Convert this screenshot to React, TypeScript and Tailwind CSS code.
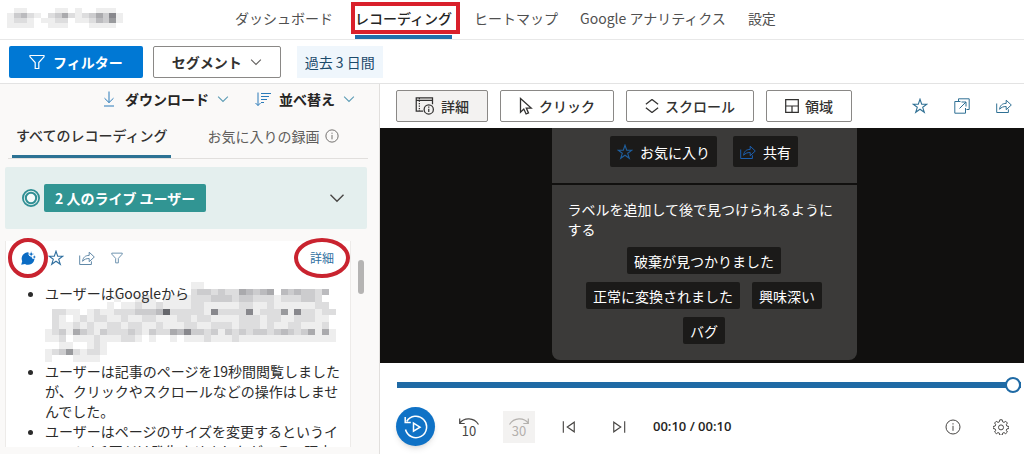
import React from 'react';

interface IconProps {
  className?: string;
  children: React.ReactNode;
}

const Icon: React.FC<IconProps> = ({ className = 'size-4', children }) => (
  <svg
    viewBox="0 0 16 16"
    fill="none"
    stroke="currentColor"
    strokeWidth="1"
    className={`shrink-0 ${className}`}
    aria-hidden="true"
  >
    {children}
  </svg>
);

const StarIcon = ({ className }: { className?: string }) => (
  <Icon className={className}>
    <path d="M8 1.200l1.700 5h5.200l-4.200 3.100 1.600 5L8 11.200l-4.300 3.100 1.600-5L1.100 6.200h5.200z" strokeWidth="1.100" />
  </Icon>
);

const ShareIcon = ({ className }: { className?: string }) => (
  <Icon className={className}>
    <path d="M.7 5.500v9h11.700v-3.200" />
    <path d="M3.600 11.300c.5-4 2.700-5.900 6.600-5.900V2.200l5.100 4.800-5.100 4.700V8.500c-3 0-5 .8-6.600 2.800z" />
  </Icon>
);

const FunnelIcon = ({ className }: { className?: string }) => (
  <Icon className={className}>
    <path d="M1 1.500h14v1.300L9.800 8.500v6H6.200v-6L1 2.800z" strokeWidth="1.200" />
  </Icon>
);

const ChevronIcon = ({ className }: { className?: string }) => (
  <Icon className={className}>
    <path d="M1.500 4.800L8 11.300l6.500-6.500" strokeWidth="1.400" />
  </Icon>
);

const InfoIcon = ({ className }: { className?: string }) => (
  <Icon className={className}>
    <circle cx="8" cy="8" r="7" />
    <path d="M8 6.800v5M8 4.200v1.300" />
  </Icon>
);

// Each digit is one cell, 0 is clear and 9 is the darkest
const siteNameCells = [
  '01100001101001110',
  '13421023521235371',
  '12210112201124361',
  '11110011100011110',
];

const summaryCells = [
  '000000000000000000000110000000000000000000',
  '000000000000000000000233232254345043433240',
  '000000000010012101111222333233222122233200',
  '000000000101121121111221111122112111111220',
  '022110121122233349222221722227122261722122',
  '021012122112112211122122111122212211222110',
  '021121211221221121112211222122212112211120',
  '123153213222321322547332313232332343235151',
  '112011121112210100101112111211111111111111',
  '001100121000000000000000000000000000000000',
  '123621221000000000000000000000000000000000',
  '100011110000000000000000000000000000000000',
];

const Mosaic: React.FC<{ cells: string[]; className: string }> = ({ cells, className }) => (
  <svg
    viewBox={`0 0 ${cells[0].length} ${cells.length}`}
    preserveAspectRatio="none"
    shapeRendering="crispEdges"
    className={className}
    aria-hidden="true"
  >
    {cells.map((row, y) =>
      row
        .split('')
        .map((level, x) => (
          <rect key={`${x}-${y}`} x={x} y={y} width="1" height="1" fill="#55565c" opacity={Number(level) / 10} />
        ))
    )}
  </svg>
);

const navItems = ['ダッシュボード', 'レコーディング', 'ヒートマップ', 'Google アナリティクス', '設定'];

const Header = () => (
  <header className="flex h-10 shrink-0 items-stretch border-b border-[#e8e8e8]">
    <div className="flex w-[235px] shrink-0 items-center pl-[7px] pb-1">
      <Mosaic cells={siteNameCells} className="h-5 w-[116px]" />
    </div>
    <nav className="flex gap-[22px] whitespace-nowrap text-[#505050]">
      {navItems.map((item) =>
        item === 'レコーディング' ? (
          <a key={item} href="#" className="relative border-b-4 border-[#1f6fab] pt-2 font-medium text-[#252525]">
            {item}
            <span className="absolute top-0.5 -right-2 -left-1 h-8 border-4 border-[#d9202b]" />
          </a>
        ) : (
          <a key={item} href="#" className="pt-2">
            {item}
          </a>
        )
      )}
    </nav>
  </header>
);

const FilterBar = () => (
  <div className="flex h-11 shrink-0 items-center border-b border-[#e3e3e3] px-[9px]">
    <button className="flex h-8 items-center gap-2 rounded-xs bg-[#0078d4] px-5 font-bold text-white">
      <FunnelIcon />
      フィルター
    </button>
    <button className="ml-2.5 flex h-8 items-center gap-2 rounded-xs border border-[#8a8886] px-[18px] font-bold text-[#323130]">
      セグメント
      <ChevronIcon className="size-3 text-[#605e5c]" />
    </button>
    <button className="ml-4 h-8 bg-[#eff6fc] px-2 text-[#1b4a6b]">過去 3 日間</button>
  </div>
);

const SessionCard = () => (
  <article className="relative min-w-0 flex-1 border-x border-[#edebe9] bg-white">
    <div className="flex h-[34px] items-center pr-4 pl-[14px] text-[#2f6f9f]">
      <button aria-label="要約" className="relative">
        <svg viewBox="0 0 16 16" className="size-4" aria-hidden="true">
          <path
            d="M8.300 2.200a6.400 6.400 0 0 0-6.100 9l-1 3.600 3.800-.9a6.300 6.300 0 0 0 9.500-5.300l-1.800.5-1.200-2.300-2.600-1 .2-1.700z"
            fill="#0b6cc4"
          />
          <path d="M11.200 1l.8 2.300 2.300.8-2.300.8-.8 2.300-.8-2.300-2.300-.8 2.300-.8z" fill="#0b6cc4" stroke="#fff" strokeWidth=".5" />
          <path d="M14.300 5.200l.5 1.200 1.200.5-1.200.5-.5 1.200-.5-1.200-1.200-.5 1.200-.5z" fill="#0b6cc4" />
        </svg>
        <span className="absolute -inset-3 rounded-full border-4 border-[#c9232f]" />
      </button>
      <button aria-label="お気に入り" className="ml-3">
        <StarIcon />
      </button>
      <button aria-label="共有" className="ml-[15px]">
        <ShareIcon className="size-4 text-[#6189a8]" />
      </button>
      <button aria-label="フィルター" className="ml-4">
        <FunnelIcon className="size-3 text-[#6189a8]" />
      </button>
      <a href="#" className="relative ml-auto text-xs">
        詳細
        <span className="absolute -inset-x-4 -inset-y-3 rounded-[50%] border-4 border-[#c9232f]" />
      </a>
    </div>
    <ul className="list-disc pt-2 pr-2 pl-[39px] leading-5 text-[#2b2b2b]">
      <li className="relative h-[78px]">
        ユーザーはGoogleから
        <Mosaic cells={summaryCells} className="absolute -top-px left-0 h-20 w-[291px]" />
      </li>
      <li>ユーザーは記事のページを19秒間閲覧しましたが、クリックやスクロールなどの操作はしませんでした。</li>
      <li>ユーザーはページのサイズを変更するというイベントを1回だけ発生させましたが、その理由は不明です。</li>
    </ul>
  </article>
);

const RecordingList = () => (
  <aside className="flex w-[380px] shrink-0 flex-col border-r border-[#e1dfdd] bg-[#faf9f8]">
    <div className="flex h-[30px] shrink-0 items-center justify-end gap-[26px] pr-6 font-bold text-[#252423]">
      <button className="flex items-center gap-2">
        <Icon className="size-4 text-[#2b7bb9]">
          <path d="M8 .5v11M3.500 7.200L8 11.600l4.500-4.400M3 15h10" />
        </Icon>
        ダウンロード
        <ChevronIcon className="size-3 text-[#5b9bb5]" />
      </button>
      <button className="flex items-center gap-2">
        <Icon className="size-4 text-[#2b7bb9]">
          <path d="M3 1.500v13M.5 12L3 14.500 5.500 12M6 2.500h10M6 5.500h8M6 8.500h6M6 11.500h3" />
        </Icon>
        並べ替え
        <ChevronIcon className="size-3 text-[#5b9bb5]" />
      </button>
    </div>

    <div className="mr-[11px] ml-2 flex h-[45px] shrink-0 border-b border-[#e1dfdd] pl-1">
      <button className="border-b-3 border-[#2c7294] px-1 font-medium text-[#323130]">すべてのレコーディング</button>
      <button className="ml-9 flex items-center gap-1.5 text-[#605e5c]">
        お気に入りの録画
        <InfoIcon className="size-3.5" />
      </button>
    </div>

    <div className="mt-2 mr-3 ml-[5px] flex h-[62px] shrink-0 items-center gap-1 rounded-xs bg-[#e4efee] pr-[22px] pl-[17px]">
      <Icon className="size-[18px] text-[#2f8f94]">
        <circle cx="8" cy="8" r="7.200" strokeWidth="1.600" />
        <circle cx="8" cy="8" r="4.600" strokeWidth="1.800" fill="#f4faf9" />
      </Icon>
      <span className="rounded-xs bg-[#319593] px-[11px] py-1 font-bold text-white">2 人のライブ ユーザー</span>
      <button aria-label="ライブ ユーザーを展開" className="ml-auto text-[#484644]">
        <ChevronIcon className="size-4" />
      </button>
    </div>

    <div className="mb-[7px] ml-[5px] flex min-h-0 flex-1 overflow-hidden pt-3">
      <SessionCard />
      <div className="w-7 shrink-0 pt-[19px] pl-[7px]">
        <div className="h-[34px] w-1.5 rounded-full bg-[#b5b4b3]" />
      </div>
    </div>
  </aside>
);

const labels = ['破棄が見つかりました', '正常に変換されました', '興味深い', 'バグ'];

const toolButton =
  'flex h-8 items-center gap-1.5 rounded-xs border border-[#8a8886] px-[18px] font-medium whitespace-nowrap text-[#323130]';

const PlayerToolbar = () => (
  <div className="flex h-11 shrink-0 items-center gap-3 pr-3 pl-4">
    <button className={`${toolButton} bg-[#f3f2f1]`}>
      <Icon className="size-5">
        <path d="M6.500 12H1V1.500h13v5M1 3.500h13" />
        <path d="M3.500 1.500V12" strokeDasharray="1 1" />
        <circle cx="11" cy="10.700" r="3.700" />
        <path d="M11 10.200v2.500M11 8.400v1" />
      </Icon>
      詳細
    </button>
    <button className={toolButton}>
      <svg viewBox="0 0 14 18" fill="none" stroke="currentColor" strokeWidth="1.300" className="h-[18px] w-3.5" aria-hidden="true">
        <path d="M1.500 1.500v13.700l3.300-3.200 2.300 5 2.400-1.100-2.200-4.800h4.900z" />
      </svg>
      クリック
    </button>
    <button className={toolButton}>
      <Icon className="size-3.5">
        <path d="M1 6l7-5.500L15 6M1 10l7 5.500 7-5.500" strokeWidth="1.400" />
      </Icon>
      スクロール
    </button>
    <button className={toolButton}>
      <Icon className="size-3.5">
        <path d="M.8.800h14.400v14.400H.8zM.8 8h14.400M8 8v7.200" strokeWidth="1.400" />
      </Icon>
      領域
    </button>
    <div className="ml-auto flex gap-[26px] text-[#2f7094]">
      <button aria-label="お気に入り">
        <StarIcon />
      </button>
      <button aria-label="新しいウィンドウで開く">
        <Icon>
          <path d="M4.500 3V.8h10.700v10.700h-2.700M11.500 10v5.200H.8V3.500h5.700" />
          <path d="M5.500 10.500L12 4M7.500 4H12v4.500" />
        </Icon>
      </button>
      <button aria-label="共有">
        <ShareIcon />
      </button>
    </div>
  </div>
);

const PlayerStage = () => (
  <div className="flex min-h-0 flex-1 items-start justify-center overflow-hidden bg-[#11100f] pl-1 text-white">
    <section className="w-[305px] rounded-b-lg bg-[#3b3a39]">
      <div className="flex h-[57px] justify-center gap-4 border-b-2 border-[#11100f] pt-2">
        <button className="flex h-[31px] items-center gap-[7px] rounded-xs bg-[#1b1a19] px-[7px]">
          <StarIcon className="size-4 text-[#1f5f9e]" />
          お気に入り
        </button>
        <button className="flex h-[31px] items-center gap-[7px] rounded-xs bg-[#1b1a19] px-[7px]">
          <ShareIcon className="size-4 text-[#1c5fb0]" />
          共有
        </button>
      </div>
      <p className="px-4 pt-3.5 leading-5">ラベルを追加して後で見つけられるようにする</p>
      <div className="flex flex-wrap justify-center gap-x-3 gap-y-2 px-8 pt-2 pb-4">
        {labels.map((label) => (
          <button key={label} className="h-[27px] rounded-xs bg-[#1b1a19] px-[7px]">
            {label}
          </button>
        ))}
      </div>
    </section>
  </div>
);

const iconButton = 'flex size-8 items-center justify-center text-[#484644]';

const PlayerControls = () => (
  <div className="shrink-0 bg-white">
    <input
      type="range"
      aria-label="再生位置"
      min={0}
      max={10}
      defaultValue={10}
      className="mt-3.5 mr-[3px] ml-[17px] block h-4 w-[calc(100%-20px)] appearance-none bg-transparent [&::-webkit-slider-runnable-track]:h-1.5 [&::-webkit-slider-runnable-track]:bg-[#1f6aa5] [&::-webkit-slider-thumb]:-mt-[5px] [&::-webkit-slider-thumb]:size-4 [&::-webkit-slider-thumb]:appearance-none [&::-webkit-slider-thumb]:rounded-full [&::-webkit-slider-thumb]:border-2 [&::-webkit-slider-thumb]:border-[#1f6aa5] [&::-webkit-slider-thumb]:bg-white"
    />
    <div className="flex items-center gap-[18px] pt-3.5 pr-[7px] pb-2 pl-4">
      <button
        aria-label="もう一度再生"
        className="flex size-[39px] items-center justify-center rounded-full bg-[#0f72c6] text-white shadow-md"
      >
        <svg viewBox="0 0 24 24" fill="none" stroke="currentColor" strokeWidth="1.500" className="size-6" aria-hidden="true">
          <path d="M1.500 14.500A10.700 10.700 0 1 0 2.700 6.500" />
          <path d="M1.200 2v5.500h5.600" />
          <path d="M9.500 8.200v8l6.500-4z" />
        </svg>
      </button>
      <button aria-label="10 秒戻る" className={iconButton}>
        <svg viewBox="0 0 20 20" fill="none" stroke="currentColor" className="size-5" aria-hidden="true">
          <path d="M.8 6.200C5 .2 15 .2 19.500 7.500M.7 1.500v5h5" strokeWidth="1.200" />
          <text x="10" y="18.500" textAnchor="middle" fill="currentColor" stroke="none" fontSize="13">
            10
          </text>
        </svg>
      </button>
      <button aria-label="30 秒進む" disabled className="flex size-8 items-center justify-center bg-[#f3f2f1] text-[#b3b0ad]">
        <svg viewBox="0 0 20 20" fill="none" stroke="currentColor" className="size-5" aria-hidden="true">
          <path d="M19.200 6.200C15 .2 5 .2.5 7.500M19.300 1.500v5h-5" strokeWidth="1.200" />
          <text x="10" y="18.500" textAnchor="middle" fill="currentColor" stroke="none" fontSize="13">
            30
          </text>
        </svg>
      </button>
      <button aria-label="前へ" className={iconButton}>
        <Icon className="size-3.5">
          <path d="M1.500 1.500v13M14 2.500v11L6 8z" strokeWidth="1.300" />
        </Icon>
      </button>
      <button aria-label="次へ" className={iconButton}>
        <Icon className="size-3.5">
          <path d="M14.500 1.500v13M2 2.500v11L10 8z" strokeWidth="1.300" />
        </Icon>
      </button>
      <span className="font-['Open_Sans','Noto_Sans_CJK_JP',sans-serif] text-[13px] font-semibold text-[#252423]">
        00:10 / 00:10
      </span>
      <div className="ml-auto flex gap-4">
        <button aria-label="情報" className={iconButton}>
          <InfoIcon />
        </button>
        <button aria-label="設定" className={iconButton}>
          <Icon>
            <path d="M6.800.8h2.400l.4 2 1.400.6 1.700-1.100 1.700 1.700-1.100 1.700.6 1.400 2 .4v2l-2 .4-.6 1.400 1.100 1.700-1.700 1.700-1.700-1.100-1.400.6-.4 2H6.800l-.4-2-1.400-.6-1.700 1.100L1.600 13l1.100-1.700-.6-1.400-2-.4v-2l2-.4.6-1.400L1.600 4l1.700-1.700L5 3.400l1.400-.6z" />
            <circle cx="8" cy="8.400" r="2.500" />
          </Icon>
        </button>
      </div>
    </div>
  </div>
);

export default function App() {
  return (
    <div className="flex h-screen flex-col overflow-hidden bg-white font-['Noto_Sans_CJK_JP',sans-serif] text-sm">
      <Header />
      <FilterBar />
      <main className="flex min-h-0 flex-1">
        <RecordingList />
        <section className="flex min-w-0 flex-1 flex-col">
          <PlayerToolbar />
          <PlayerStage />
          <PlayerControls />
        </section>
      </main>
    </div>
  );
}
